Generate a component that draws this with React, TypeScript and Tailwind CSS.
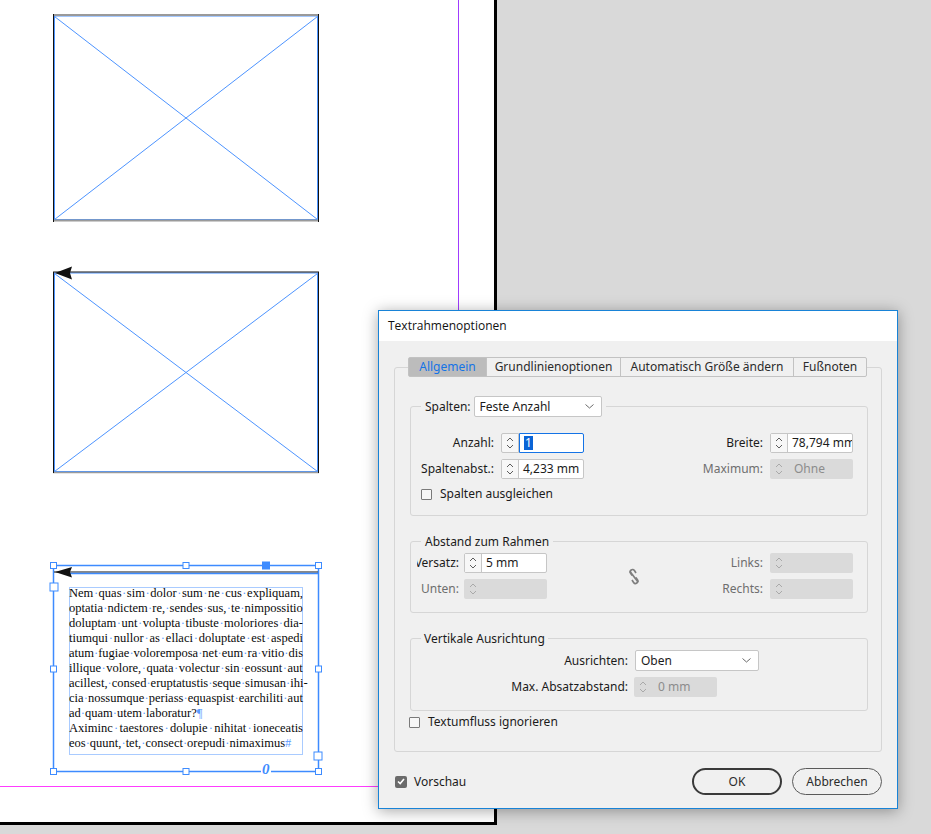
import clsx from 'clsx';

// Text lines of the placeholder text frame
const lines: { text: string; justify: boolean; end?: string }[] = [
    { text: 'Nem quas sim dolor sum ne cus expliquam,', justify: true },
    { text: 'optatia ndictem re, sendes sus, te nimpossitio', justify: true },
    { text: 'doluptam unt volupta tibuste moloriores dia-', justify: true },
    { text: 'tiumqui nullor as ellaci doluptate est aspedi', justify: true },
    { text: 'atum fugiae voloremposa net eum ra vitio dis', justify: true },
    { text: 'illique volore, quata volectur sin eossunt aut', justify: true },
    { text: 'acillest, consed eruptatustis seque simusan ihi-', justify: true },
    { text: 'cia nossumque periass equaspist earchiliti aut', justify: true },
    { text: 'ad quam utem laboratur?', justify: false, end: '¶' },
    { text: 'Aximinc taestores dolupie nihitat ioneceatis', justify: true },
    { text: 'eos quunt, tet, consect orepudi nimaximus', justify: false, end: '#' },
];

const Dot = () => <span className="text-[#5b9bff]">·</span>;

const TextLine = ({ text, justify, end }: { text: string; justify: boolean; end?: string }) => {
    const words = text.split(' ');
    const parts: JSX.Element[] = [];
    words.forEach((w, i) => {
        if (i > 0) parts.push(<Dot key={'d' + i} />);
        parts.push(<span key={'w' + i}>{w}</span>);
    });
    if (end) parts.push(<span key="end" className="text-[#5b9bff]">{end}</span>);
    return (
        <div className={clsx('flex h-[15px] items-center whitespace-nowrap', justify ? 'justify-between' : 'justify-start')}>
            {parts}
        </div>
    );
};

// Small up/down chevrons used in spinner fields
const SpinArrows = ({ faint }: { faint?: boolean }) => (
    <svg width="10" height="16" viewBox="0 0 10 16" fill="none" stroke={faint ? '#a9a9a9' : '#5c5c5c'} strokeWidth="1">
        <path d="M2 6 L5 3 L8 6" />
        <path d="M2 10 L5 13 L8 10" />
    </svg>
);

const Chevron = () => (
    <svg width="9" height="5" viewBox="0 0 9 5" fill="none" stroke="#6a6a6a" strokeWidth="1">
        <path d="M0.5 0.5 L4.5 4 L8.5 0.5" />
    </svg>
);

const SpinField = ({ value, disabled, focused }: { value?: string; disabled?: boolean; focused?: boolean }) => {
    if (disabled) {
        return (
            <div className="flex h-[20px] w-[83px] items-center rounded-[2px] bg-[#dadada]">
                <div className="flex w-[18px] justify-center">
                    <SpinArrows faint />
                </div>
                <span className="pl-[6px] text-[#8c8c8c]">{value}</span>
            </div>
        );
    }
    if (focused) {
        return (
            <div className="flex h-[20px] w-[83px]">
                <div className="flex w-[18px] items-center justify-center rounded-l-[2px] border border-[#c6c6c6] bg-[#f7f7f7]">
                    <SpinArrows />
                </div>
                <div className="flex flex-1 items-center rounded-r-[2px] border border-[#1473e6] bg-white pl-[4px]">
                    <span className="bg-[#0a64d6] px-[1px] leading-[14px] text-white">{value}</span>
                </div>
            </div>
        );
    }
    return (
        <div className="flex h-[20px] w-[83px] rounded-[2px] border border-[#c6c6c6] bg-white">
            <div className="flex w-[17px] items-center justify-center border-r border-[#c6c6c6] bg-[#f7f7f7]">
                <SpinArrows />
            </div>
            <div className="flex flex-1 items-center overflow-hidden whitespace-nowrap pl-[4px] text-[#1b1b1b]">{value}</div>
        </div>
    );
};

const Select = ({ value, width }: { value: string; width: string }) => (
    <div className={clsx('flex h-[21px] items-center justify-between rounded-[2px] border border-[#c6c6c6] bg-white pl-[5px] pr-[7px] text-[#1b1b1b]', width)}>
        <span>{value}</span>
        <Chevron />
    </div>
);

const CheckBox = ({ label }: { label: string }) => (
    <div className="flex h-[16px] items-center gap-[8px]">
        <div className="h-[11px] w-[11px] rounded-[1px] border border-[#7a7a7a] bg-[#f7f7f7]" />
        <span className="text-[#1b1b1b]">{label}</span>
    </div>
);

const Label = ({ children, muted, className }: { children: string; muted?: boolean; className?: string }) => (
    <span className={clsx('whitespace-nowrap text-right', muted ? 'text-[#6e6e6e]' : 'text-[#1b1b1b]', className)}>{children}</span>
);

const Handle = ({ x, y, s = 6, filled }: { x: number; y: number; s?: number; filled?: boolean }) => (
    <rect x={x - s / 2} y={y - s / 2} width={s} height={s} fill={filled ? '#3d8bff' : '#fff'} stroke="#3d8bff" strokeWidth="1" />
);

const tabs = [
    { label: 'Allgemein', w: 'w-[77px]', active: true },
    { label: 'Grundlinienoptionen', w: 'w-[134px]' },
    { label: 'Automatisch Größe ändern', w: 'w-[173px]' },
    { label: 'Fußnoten', w: 'w-[73px]' },
];

export default function App() {
    return (
        <div className="relative h-[834px] w-[931px] overflow-hidden bg-[#d9d9d9] font-['Noto_Sans',sans-serif] text-[12px]">
            {/* Page */}
            <div className="absolute left-0 top-0 h-[825px] w-[497px] border-b-[3px] border-r-[3px] border-black bg-white">
                {/* guides */}
                <div className="absolute left-[458px] top-0 h-[786px] w-px bg-[#a03cff]" />
                <div className="absolute left-0 top-[786px] h-px w-[458px] bg-[#ff3cff]" />

                {/* Image frame 1 */}
                <svg className="absolute left-[53px] top-[14px]" width="266" height="208">
                    <rect x="1.5" y="2" width="263" height="203.5" fill="none" stroke="#4d94ff" strokeWidth="1" />
                    <line x1="1.5" y1="2.5" x2="264.5" y2="205.5" stroke="#4d94ff" strokeWidth="1" />
                    <line x1="264.5" y1="2.5" x2="1.5" y2="205.5" stroke="#4d94ff" strokeWidth="1" />
                    <line x1="0" y1="1" x2="266" y2="1" stroke="#9a9a9a" strokeWidth="2" />
                    <line x1="0" y1="206.5" x2="266" y2="206.5" stroke="#9a9a9a" strokeWidth="2" />
                    <line x1="0.5" y1="0" x2="0.5" y2="208" stroke="#111" strokeWidth="1" />
                    <line x1="265.5" y1="0" x2="265.5" y2="208" stroke="#111" strokeWidth="1" />
                </svg>

                {/* Image frame 2 */}
                <svg className="absolute left-[53px] top-[264px]" width="266" height="210">
                    <rect x="1.5" y="9" width="263" height="198.5" fill="none" stroke="#4d94ff" strokeWidth="1" />
                    <line x1="1.5" y1="9.5" x2="264.5" y2="207.5" stroke="#4d94ff" strokeWidth="1" />
                    <line x1="264.5" y1="9.5" x2="1.5" y2="207.5" stroke="#4d94ff" strokeWidth="1" />
                    <line x1="0" y1="8" x2="266" y2="8" stroke="#111" strokeWidth="1" />
                    <line x1="0" y1="208.5" x2="266" y2="208.5" stroke="#9a9a9a" strokeWidth="1.5" />
                    <line x1="0.5" y1="8" x2="0.5" y2="209" stroke="#111" strokeWidth="1" />
                    <line x1="265.5" y1="8" x2="265.5" y2="209" stroke="#111" strokeWidth="1" />
                    <polygon points="2,9 19,2.5 17,9 19,15.5" fill="#111" />
                </svg>

                {/* Text frame (selected) */}
                <svg className="absolute left-[48px] top-[559px]" width="278" height="222">
                    <rect x="5.5" y="6.5" width="265" height="206" fill="none" stroke="#3d8bff" strokeWidth="1.5" />
                    <line x1="6" y1="13" x2="270" y2="13" stroke="#111" strokeWidth="1" />
                    <line x1="20" y1="14.5" x2="270" y2="14.5" stroke="#3d8bff" strokeWidth="1.5" />
                    <polygon points="7,13 24,8 22,13 24,18.5" fill="#111" />
                    <Handle x={5.5} y={6.5} />
                    <Handle x={138} y={6.5} />
                    <Handle x={218} y={6.5} s={7} filled />
                    <Handle x={270.5} y={6.5} />
                    <Handle x={5.5} y={110} />
                    <Handle x={270.5} y={110} />
                    <Handle x={5.5} y={212.5} />
                    <Handle x={138} y={212.5} />
                    <Handle x={270.5} y={212.5} />
                    <Handle x={6} y={28} s={8} />
                    <Handle x={270} y={197} s={8} />
                </svg>
                <span className="absolute left-[261px] top-[762px] bg-white px-px font-['Liberation_Serif',serif] text-[15px] font-bold italic leading-[15px] text-[#3d8bff]">
                    0
                </span>
                <div className="absolute left-[69px] top-[587px] h-[168px] w-[234px] border border-[#a9cbff] font-['Liberation_Serif',serif] text-[12.5px] text-[#0a0a0a]">
                    <div className="-mx-px -mt-[2px]">
                        {lines.map((l, i) => (
                            <TextLine key={i} {...l} />
                        ))}
                    </div>
                </div>
            </div>

            {/* Dialog */}
            <div className="absolute left-[378px] top-[310px] flex h-[499px] w-[520px] flex-col border border-[#1883d7] bg-[#f0f0f0] shadow-[0_2px_14px_rgba(0,0,0,0.35)]">
                <div className="flex h-[30px] items-center bg-white pl-[9px] font-['Open_Sans',sans-serif] text-[12px] text-[#111]">
                    Textrahmenoptionen
                </div>

                <div className="px-[15px] pt-[16px]">
                    {/* Tabs */}
                    <div className="relative z-10 ml-[14px] flex h-[20px] w-fit rounded-[2px] border border-[#c2c2c2] bg-[#f0f0f0]">
                        {tabs.map((t, i) => (
                            <div
                                key={t.label}
                                className={clsx(
                                    'flex items-center justify-center whitespace-nowrap',
                                    t.w,
                                    i > 0 && 'border-l border-[#c2c2c2]',
                                    t.active ? 'bg-[#bcbcbc] text-[#1473e6]' : 'text-[#2b2b2b]'
                                )}
                            >
                                {t.label}
                            </div>
                        ))}
                    </div>

                    {/* Tab panel */}
                    <div className="-mt-[10px] h-[385px] rounded-[3px] border border-[#d6d6d6] pl-[15px] pr-[13px] pt-[28px]">
                        {/* Spalten */}
                        <fieldset className="rounded-[3px] border border-[#d6d6d6] pb-[13px] pl-[10px] pr-[14px]">
                            <legend className="flex items-center gap-[3px] px-[4px]">
                                <span className="text-[#1b1b1b]">Spalten:</span>
                                <Select value="Feste Anzahl" width="w-[128px]" />
                            </legend>
                            <div className="flex flex-col gap-[6px] pt-[16px]">
                                <div className="flex items-center justify-between">
                                    <div className="flex items-center gap-[7px]">
                                        <Label className="w-[73px]">Anzahl:</Label>
                                        <SpinField value="1" focused />
                                    </div>
                                    <div className="flex items-center gap-[7px]">
                                        <Label>Breite:</Label>
                                        <SpinField value="78,794 mm" />
                                    </div>
                                </div>
                                <div className="flex items-center justify-between">
                                    <div className="flex items-center gap-[7px]">
                                        <Label className="w-[73px]">Spaltenabst.:</Label>
                                        <SpinField value="4,233 mm" />
                                    </div>
                                    <div className="flex items-center gap-[7px]">
                                        <Label muted>Maximum:</Label>
                                        <SpinField value="Ohne" disabled />
                                    </div>
                                </div>
                            </div>
                            <div className="mt-[7px]">
                                <CheckBox label="Spalten ausgleichen" />
                            </div>
                        </fieldset>

                        {/* Abstand zum Rahmen */}
                        <fieldset className="mt-[17px] rounded-[3px] border border-[#d6d6d6] pb-[13px] pl-[6px] pr-[14px]">
                            <legend className="ml-[4px] px-[4px] leading-[17px] text-[#1b1b1b]">Abstand zum Rahmen</legend>
                            <div className="flex items-center pt-[3px]">
                                <div className="flex flex-col gap-[6px]">
                                    <div className="flex items-center gap-[5px]">
                                        <div className="flex w-[42px] justify-end overflow-hidden">
                                            <Label>Versatz:</Label>
                                        </div>
                                        <SpinField value="5 mm" />
                                    </div>
                                    <div className="flex items-center gap-[5px]">
                                        <div className="flex w-[42px] justify-end overflow-hidden">
                                            <Label muted>Unten:</Label>
                                        </div>
                                        <SpinField disabled />
                                    </div>
                                </div>
                                <div className="flex flex-1 justify-center pr-[2px]">
                                    <svg width="14" height="17" viewBox="0 0 14 17" fill="none" stroke="#7e7e7e" strokeWidth="1.7">
                                        <path d="M5.2 7.6 L3.6 5.2 A2.3 2.3 0 0 1 7.4 2.6 L9 5" />
                                        <path d="M8.8 9.4 L10.4 11.8 A2.3 2.3 0 0 1 6.6 14.4 L5 12" />
                                        <line x1="3" y1="3.5" x2="11" y2="14" />
                                    </svg>
                                </div>
                                <div className="flex flex-col items-end gap-[6px]">
                                    <div className="flex items-center gap-[7px]">
                                        <Label muted>Links:</Label>
                                        <SpinField disabled />
                                    </div>
                                    <div className="flex items-center gap-[7px]">
                                        <Label muted>Rechts:</Label>
                                        <SpinField disabled />
                                    </div>
                                </div>
                            </div>
                        </fieldset>

                        {/* Vertikale Ausrichtung */}
                        <fieldset className="mt-[17px] rounded-[3px] border border-[#d6d6d6] pb-[13px] pl-[10px]">
                            <legend className="px-[3px] leading-[17px] text-[#1b1b1b]">Vertikale Ausrichtung</legend>
                            <div className="flex flex-col gap-[6px] pt-[3px]">
                                <div className="flex items-center gap-[7px]">
                                    <Label className="w-[207px]">Ausrichten:</Label>
                                    <Select value="Oben" width="w-[124px]" />
                                </div>
                                <div className="flex items-center gap-[6px]">
                                    <Label className="w-[207px]">Max. Absatzabstand:</Label>
                                    <SpinField value="0 mm" disabled />
                                </div>
                            </div>
                        </fieldset>

                        <div className="-ml-[1px] mt-[3px]">
                            <CheckBox label="Textumfluss ignorieren" />
                        </div>
                    </div>
                </div>

                {/* Footer */}
                <div className="flex items-center justify-between pl-[16px] pr-[15px] pt-[16px]">
                    <div className="flex items-center gap-[7px]">
                        <div className="flex h-[12px] w-[12px] items-center justify-center rounded-[2px] bg-[#6b6b6b]">
                            <svg width="8" height="7" viewBox="0 0 8 7" fill="none" stroke="#fff" strokeWidth="1.6">
                                <path d="M1 3.5 L3.2 5.6 L7 1" />
                            </svg>
                        </div>
                        <span className="text-[#1b1b1b]">Vorschau</span>
                    </div>
                    <div className="flex gap-[10px]">
                        <button className="flex h-[27px] w-[90px] items-center justify-center rounded-full border-2 border-[#3a3a3a] text-[#2b2b2b]">
                            OK
                        </button>
                        <button className="flex h-[27px] w-[90px] items-center justify-center rounded-full border border-[#5a5a5a] text-[#2b2b2b]">
                            Abbrechen
                        </button>
                    </div>
                </div>
            </div>
        </div>
    );
}
